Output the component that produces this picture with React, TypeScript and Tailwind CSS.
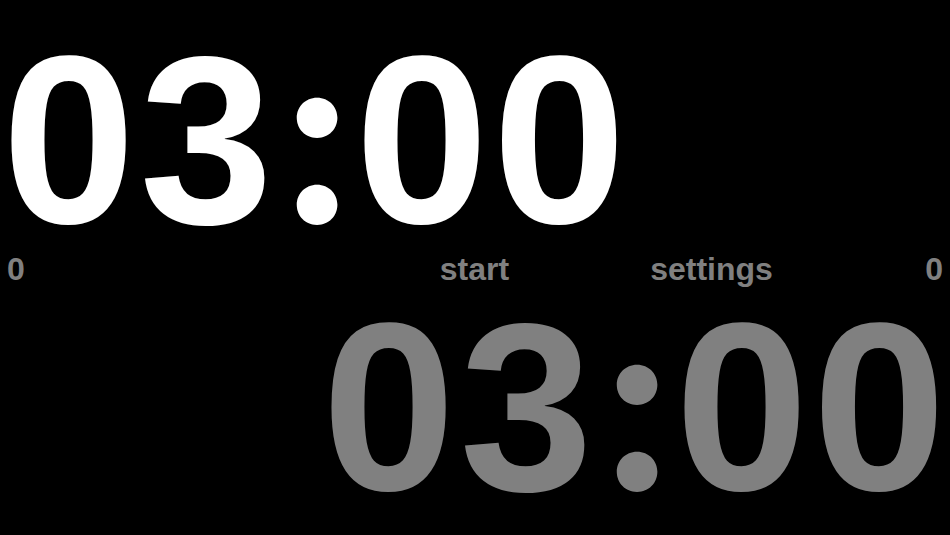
function Clock({ className }: { className: string }) {
  return (
    <div className={`text-[240px] leading-[200px] font-bold tracking-[4px] whitespace-nowrap ${className}`}>
      03
      <span className="inline-block w-[78px] text-center tracking-normal leading-[0px] font-['Inter',sans-serif]">:</span>
      00
    </div>
  );
}

export default function App() {
  return (
    <div className="w-full h-screen bg-black overflow-hidden font-['Liberation_Sans',Arial,sans-serif] select-none">
      {/* own timer */}
      <Clock className="pl-[2px] pt-[40px] text-white" />

      {/* controls */}
      <div className="grid grid-cols-[349px_237px_237px_1fr] px-[7px] mt-[13px] text-[32px] leading-[32px] font-bold text-[#808080]">
        <span>0</span>
        <span className="text-center">start</span>
        <span className="text-center">settings</span>
        <span className="text-right">0</span>
      </div>

      {/* opponent timer */}
      <Clock className="pl-[322px] mt-[22px] text-[#808080]" />
    </div>
  );
}
